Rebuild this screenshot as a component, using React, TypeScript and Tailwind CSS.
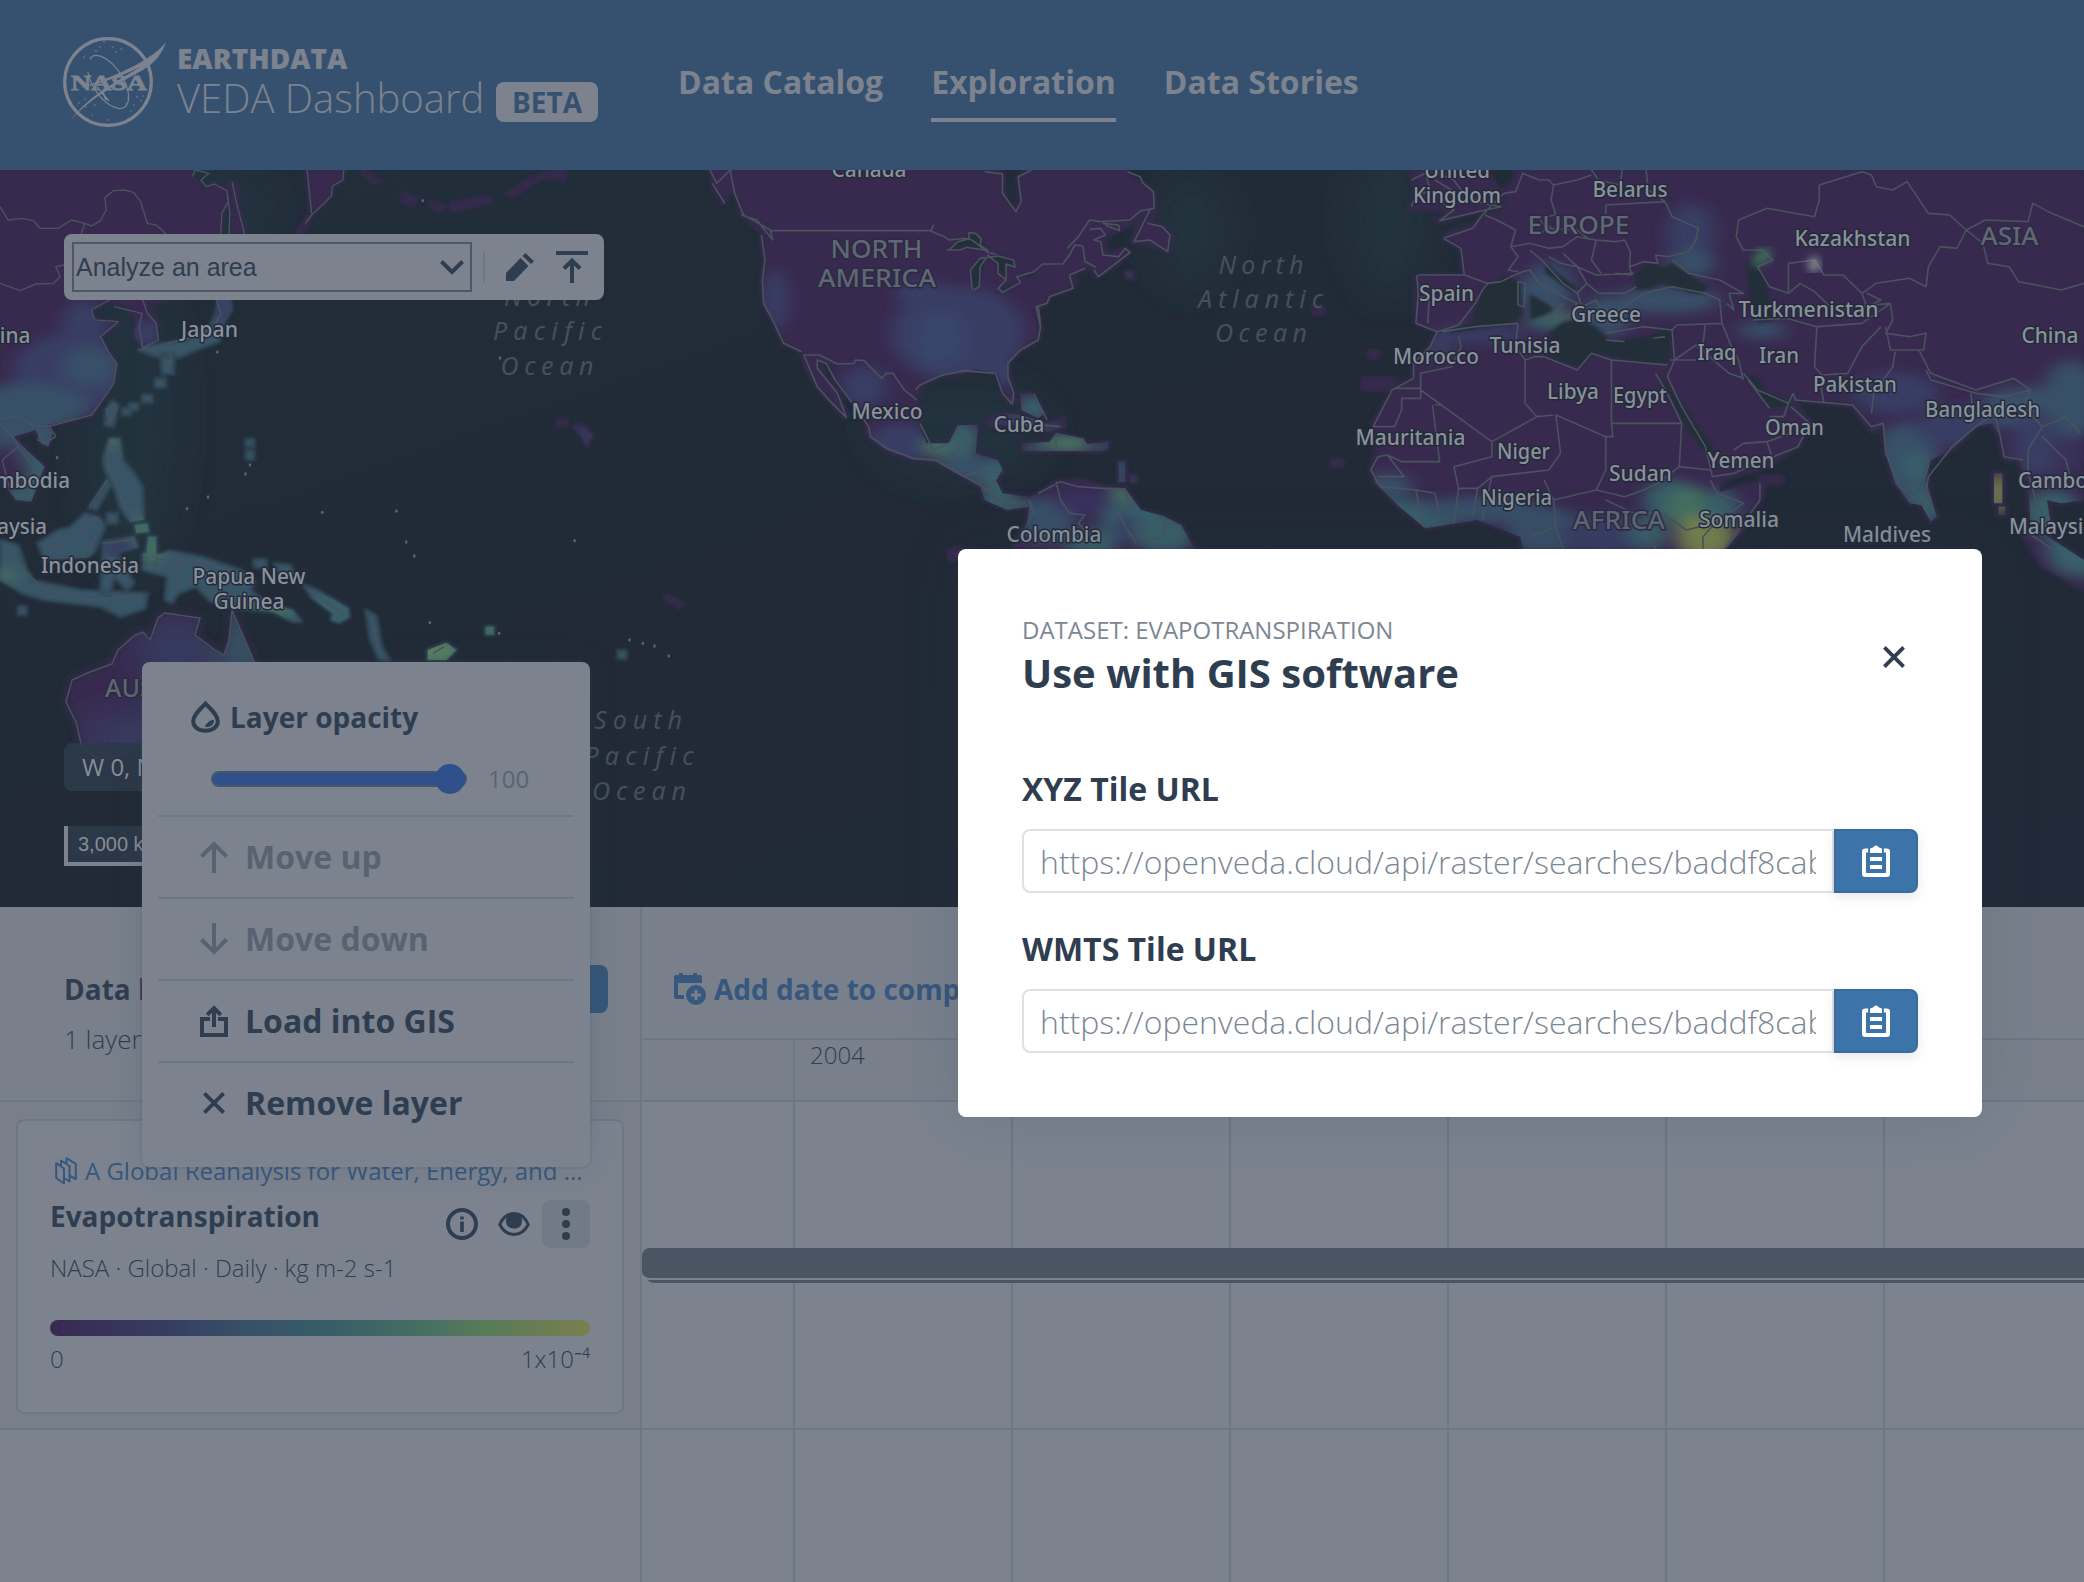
import React from "react";

type Blob = [number, number, number, number, string];

function Region({
  id,
  transform,
  land,
  blobs,
  seas,
  lines,
}: {
  id: string;
  transform: string;
  land: string;
  blobs: Blob[];
  seas?: string;
  lines: string;
}) {
  return (
    <g transform={transform}>
      <clipPath id={id}>
        <path d={land} />
      </clipPath>
      <path d={land} fill="#38294f" stroke="#33294a" strokeWidth="12" strokeLinejoin="round" filter="url(#soft)" />
      <g clipPath={`url(#${id})`}>
        <g filter="url(#wide)">
          {blobs.map(([cx, cy, rx, ry, fill], i) => (
            <ellipse key={i} cx={cx} cy={cy} rx={rx} ry={ry} fill={fill} />
          ))}
        </g>
      </g>
      {seas && <path d={seas} fill="#212d39" filter="url(#soft)" />}
      <path
        d={lines}
        fill="none"
        stroke="#4a525e"
        strokeWidth="1.6"
        strokeLinejoin="round"
        vectorEffect="non-scaling-stroke"
      />
    </g>
  );
}

const B = "#383c63";
const C = "#375068";
const T = "#375e69";
const G = "#44705f";
const Y = "#74804c";

const westLand =
  "M0 30H438L430 50 455 92 480 70 508 92 512 120 497 160 495 222 440 300 370 420 330 440 352 490 352 540 320 565 300 530 305 480 290 450 245 420 205 450 215 485 250 480 268 492 225 530 245 580 262 610 255 670 235 710 205 765 150 785 105 795 118 820 108 860 92 850 80 810 30 830 60 870 100 920 85 970 70 1025 35 1020 15 980 0 960ZM516 68 528 70 535 150 550 222H522ZM688 30H770L768 60 745 75 740 110 725 130 700 160 685 200 672 222 665 215 698 160Z" +
  "M812 30 830 42 850 65 840 70 818 50ZM902 100 930 115 925 135 905 125ZM965 125 995 140 990 152 966 140ZM1010 130 1095 110 1100 128 1015 152ZM1135 100 1190 55 1240 30H1265L1262 60 1215 50 1150 108Z" +
  "M1305 795 1328 825 1315 858 1303 830 1285 800ZM1250 780H1266V798H1250ZM1492 1305 1528 1328 1520 1342 1495 1320Z";
const islands =
  "M490 420H515L518 450 500 490 490 545 440 570 400 592 350 590 310 570 340 555 420 540 470 500 485 460ZM360 580H390L388 642H364ZM348 656H370V682H348ZM320 705H340V727H320ZM290 730H308V750H290ZM275 745H292V764H275ZM552 838H568V860H552ZM552 872H568V898H552Z" +
  "M252 722 264 735 254 800 236 795 238 750ZM245 835H268L275 900 300 940 318 980 322 1080 292 1085 270 1045 258 990 235 930 232 895ZM240 960 250 970 215 1050 200 1045ZM240 1060H262V1090H240ZM302 1095 330 1090 334 1115 305 1120ZM332 1130H350V1210H325Z" +
  "M190 1060 222 1072 235 1100 210 1180 190 1192 100 1200 85 1150 130 1110 160 1100ZM232 1145 300 1130 308 1160 260 1180 300 1270 285 1290 255 1250 245 1310 225 1300 230 1200ZM0 1140 40 1155 60 1230 75 1262 180 1290 330 1300 325 1345 270 1370 225 1340 100 1320 50 1300 0 1260ZM42 1340H58V1364H42Z" +
  "M320 1180 360 1182 380 1172 450 1190 540 1230 570 1262 562 1292 600 1330 655 1350 675 1385 655 1385 610 1355 520 1345 470 1322 440 1280 400 1300 385 1330 370 1320 375 1250 320 1230ZM570 1198H596V1222H570ZM615 1210 650 1215 660 1250 630 1250ZM680 1275 710 1290 780 1345 782 1372 760 1388 742 1380 745 1360 700 1315ZM820 1350 842 1368 855 1460 872 1500H850L830 1440ZM1088 1400H1106V1424H1088ZM958 1470 1000 1448 1022 1470 1000 1500H958ZM1385 1472H1402V1496H1385Z";
const westLines =
  "M0 140 18 180 50 175 75 182 90 205 130 205 160 180 190 190 205 198 225 182 238 150 235 112 255 92 280 90 300 98 315 125 330 190 350 195 372 222M190 190 182 222M688 30 698 160M430 50 438 30 468 40 450 60 462 80 480 72 508 92 512 122 497 160 494 222M508 92 515 160 513 222M520 66 530 130 548 222M770 30 768 60 745 78 742 108 726 130 698 165 684 190M143 315 125 320 135 350 120 370 80 372 45 392 0 370M245 420 205 450 212 480 265 485 225 530 245 580 262 610 255 670 235 710 205 765 150 785 112 798M320 420 330 460 350 490 355 540 320 565 312 500 318 460 255 440M485 420 495 460 480 500 440 530 390 545 355 560 312 570M375 560 385 600 372 625M0 775 45 768 75 800 110 798 125 830 100 850 85 840 95 810M0 790 30 830 45 870 80 930 85 975 60 1000 20 980 5 900 40 860M255 730 262 745 248 785 238 750ZM245 850 270 880 262 930 300 990 310 1060 280 1050 262 980 240 920ZM90 1150 130 1160 190 1100 215 1070 230 1090M20 1170 60 1240 100 1290 200 1320 320 1305M100 1195 200 1190 215 1120M230 1150 295 1140M245 1190 280 1240M390 1180 400 1200 395 1290M340 1190 390 1210 450 1200 530 1240M460 1290 520 1320 580 1320 650 1350M690 1290 770 1360M240 960 200 1040M835 1390 850 1480M970 1480 995 1460";

const americas =
  "M45 30 55 90 75 130 85 90 105 105 115 165 150 205 180 235 160 235 168 300 162 360 165 430 185 480 210 550 250 575 262 625 285 680 315 725 345 775 352 765 330 700 300 640 290 600 310 610 340 690 370 730 395 790 400 830 440 870 500 900 550 905 600 940 650 980 660 1020 710 1050 760 1040 755 1090 730 1140 725 1180H1135L1100 1095 1060 1068 1010 1050 975 985 930 980 870 960 820 965 780 1000 760 1010 700 1000 685 960 700 930 690 900 640 880 645 795 600 795 580 850 530 850 512 800 510 720 515 680 560 645 610 640 640 628 690 640 700 690 715 732 728 720 715 650 712 610 740 570 780 540 785 500 775 450 800 430 805 405 850 390 865 360 850 345 900 320 910 350 960 310 985 275 970 265 935 285 925 235 990 190 1010 170 1040 145 1038 95 1015 70 985 50 980 30H760L735 50 740 120 730 155 705 120 700 40 690 30Z" +
  "M1030 150 1010 180 990 245 1050 262 1072 275 1080 225 1060 200 1032 190 1042 150ZM665 775 700 760 740 765 800 790 840 775 838 800 800 815 720 795 670 795ZM740 700H765L795 760 780 775 742 750ZM745 850 805 845 820 818 880 835 890 852 938 845 935 868 920 874H745ZM960 905H975V965H960ZM988 948H1000V966H988ZM978 335H992V355H978ZM580 1168 610 1162V1200H582ZM1398 440H1416V462H1398ZM1524 575H1538V592H1524ZM1510 660H1560V682H1510ZM1440 900H1460V918H1440Z";
const lakes =
  "M580 270 600 240 640 220 670 270 620 260ZM650 295 630 330 635 390 645 380 660 300ZM665 290 700 285 725 300 725 320 705 310 710 350 690 340 685 310ZM685 390 740 365 735 375 695 397ZM735 350 775 335 770 350Z";
const americasLines =
  "M182 212H540L545 196 540 214 570 230 580 240 615 235 632 240M580 270 600 245 625 236 625 218 640 220 652 236 650 255 668 272 620 262 605 270 575 270M632 240 668 278 685 282M632 390 628 330 650 295 690 288 725 300 728 322 708 312 708 360 690 385 700 397 740 368 732 350 770 335 790 312H835L850 285 862 255 880 258 885 305 910 322M636 390 648 380 650 320 664 292M666 285 690 310 690 340 708 360M845 265 870 230 895 180 920 185 985 180 1010 152 1040 145 1038 95 1015 70 1008 50 980 35M895 208 920 205 930 225 905 240 920 245 925 285 960 290 975 265 985 278 915 350 905 330M925 190 960 195 962 212 930 195M1030 150 995 245 1030 240 1070 275 1075 225 1058 200 1025 190M660 35 700 42 700 100 730 155 742 125 735 50 765 30M45 30 60 70 90 30 100 100 120 165 180 210 185 240 150 180 115 165M50 70 78 130M160 225 168 300 162 360 165 430 185 480 210 550 250 575M255 585H290L330 612 368 610 370 600 390 602 410 630 430 655 440 640H455L480 690 508 720M255 585 285 680 315 725 350 772 330 700 285 625 285 600 305 610 325 660 370 740 400 800 405 830 440 865 500 895 550 900 600 940 650 975 690 1020 750 1030M505 690 515 675 560 648 610 632 685 640 700 700 722 732 725 700 712 650 712 610 740 570 780 540 785 500 775 440 800 430 805 410 858 385 850 345 885 325M515 790 545 870 580 850 605 800M575 890 600 870 605 840 625 855 615 900M615 950 650 930 690 940M665 990 690 950M760 1020 770 1060 755 1090M820 965 830 1020 850 1060 885 1065 870 1090 890 1120M780 1000 830 965 870 980 975 990 985 1040 960 1060 975 1100 1000 1150M1015 1080 1020 1150M1065 1075 1060 1135 1020 1140M740 790 830 800M770 700 800 780M820 830 820 870M880 835 880 865M780 440 785 490";

const east =
  "M145 150 160 100 150 30H305L330 80 348 130 300 150 215 188 200 180 240 152ZM375 30 362 70 342 95 347 150 305 165 280 190 240 210 218 235 255 265 260 345 200 342 162 350 160 490 205 515 190 560 155 605 155 650 110 690 70 790 80 860 65 920 75 970 125 1040 180 1105 290 1080 380 1130 388 1180H805L860 1090 890 1010 895 968 860 975 800 995 800 975 815 955 900 920 965 860 995 790 965 745 955 700 960 720 1020 730 1080 740 1120 815 1145 800 1150 880 1170 970 1200 1030 1225 1035 1245 1085 1258 1070 1245 1010 1235 960 1245 900 1290 870 1340 800 1375 790 1390 830 1400 900 1430 900 1450 980 1455 1080 1500 1110 1490 1020 1520 1030 1568 1020V30ZM1425 1095 1470 1110 1568 1200V1290L1480 1220ZM50 655H118L105 688H52ZM64 575H78V592H64ZM885 950H930V970H885ZM1378 940H1396V1030H1378ZM1388 1040H1402V1064H1388Z";
const seas =
  "M620 390 625 340 650 305 680 325 700 310 740 345 775 380 765 402 740 400 680 370 650 388ZM300 385 350 345 380 370 385 460 370 490 280 510 235 520 232 510 275 490 290 430ZM400 400 450 445 440 460 400 480ZM465 490 500 478 540 500 570 545 640 530 700 500 692 610 640 610 540 580 505 622 440 595 440 520ZM435 312 500 385 490 400 430 335ZM665 640 695 680 725 740 785 860 790 885 772 875 740 830 710 750ZM850 640 880 650 900 695 945 720 948 740 905 745 880 700ZM240 185 280 180 270 195 240 210ZM855 310 870 300 885 330 900 380 905 430 915 480 880 490 865 440Z";
const eastLines =
  "M150 60 180 40 190 90 160 110 150 140M200 35 240 60 260 100 300 130 340 140 290 155 210 182 240 150 215 130 235 90 200 60M218 235 280 205 300 165 345 100 370 95 385 40 420 60 440 60 450 75 500 60 530 45M450 75 445 120 455 165 420 175 435 205 500 210 525 238M530 30 545 60 590 75 595 30M645 30 650 90 685 125 560 135 560 165 550 220M685 125 700 170 755 205 750 240 735 275 690 290 665 285 670 310 640 305 610 320 615 345 580 340M218 235 255 265 262 345 310 370 340 365 360 350 385 335 400 330 420 370 470 410 500 430 480 470 430 480M165 345 260 345M162 345 165 400 160 490 205 515 250 495 285 430 300 390 312 370M165 410 188 415 185 490M305 165 330 180 370 210 360 260 375 290 355 330 375 335M360 260 400 250 440 265 470 260 500 230 540 240 580 245 600 240 612 275 610 320M400 270 425 300 470 370 500 400 520 370 500 320 465 310 440 290M470 280 500 320 540 345 620 340M540 240 530 300 550 340M430 180 445 205 420 220M520 370 545 400 600 400 625 380M500 400 510 440 540 420 560 470 600 440 640 400 700 380 770 400M560 520 640 500 700 510 710 495 805 490M700 300 735 340 800 360 850 400 820 400 830 450 815 430M770 400 800 420 805 490 825 560 840 600 850 660M835 230 840 180 900 145 940 155 1000 170 1010 120 1010 75 1100 35 1120 45 1130 80 1165 90 1195 65 1240 160 1285 165 1320 210 1360 180 1450 185 1460 130 1500 160 1568 200M835 230 850 270 890 270 912 300 880 320 905 380 945 400 970 370 1000 395 1040 450 1090 440 1160 430M945 395V310L1000 300 1020 345 1060 345 1100 400 1130 370 1200 355 1235 380 1240 320 1265 260 1300 265 1320 210 1355 250 1365 310 1410 320 1430 365 1520 390 1568 370M1100 400 1110 440 1140 420 1110 400M1160 430 1165 480 1150 520 1200 530 1235 520 1230 570 1160 570 1150 500M870 480 940 475 1005 500 1100 490 1160 430M1005 500 1000 620 1015 645 1015 690 1020 730M1015 645 1070 640 1100 560 1140 500M1220 570 1245 640 1340 690 1420 655 1455 690 1400 710 1340 700 1245 660 1235 630M1120 760 1125 700 1165 620 1170 575M955 700 960 720 1080 735 1120 800 1145 790 1150 880 1180 980 1230 1035 1240 950 1290 860 1340 800 1380 760 1390 820 1400 890 1440 900M1330 700 1335 790M1455 690 1440 740 1480 800 1450 870 1450 950M1480 800 1530 770 1560 820M1480 830 1530 900 1540 960M1450 940 1470 1040 1500 1100M850 640 880 690 945 730 955 700M860 660 905 745M945 730 935 770 905 770M700 510 705 600 750 555 820 640 850 655M695 600 750 600M770 490 765 555M705 600 690 650 720 740 770 860 785 950 830 940 965 860 990 790 950 740M830 870 850 850 900 845 950 820M900 845 910 890M205 515 190 560 155 610 155 655 110 690 70 800H115L130 750V715H170V685H115M170 690V640L235 620 255 560 250 530M170 690 320 845 415 770 450 765M200 735H215M195 735 210 905H130L100 885 80 890M320 845V890L240 920M415 770 390 730 390 600 370 560 375 490M375 490 285 500 215 515M390 600 410 590 430 590 500 630 530 580 572 600 690 615M572 600V790H720M572 790 575 830 560 830 455 765 465 880 440 930 320 950M560 830V930L540 990 450 1020 430 960M665 640 690 700 720 790 715 920 780 930M80 890 65 930 85 980 160 990 175 1100M100 885 135 950 80 950M160 990 200 1000 210 1060M240 920 250 985 240 1090M250 985 290 985 280 1070M290 985 320 950 310 1010 300 1080M450 1020 455 1100 400 1130M455 1100 470 1166M540 990 600 1010 640 990 670 970 715 920M560 1020 620 1060 680 1060 730 1110 790 1090 850 1030 795 1000 780 960M790 1090 765 1130V1166M640 1060 665 1166M885 970 885 1020 850 1090 810 1166M560 540 600 545M660 535 685 530M440 480 470 430M375 365 390 370 388 440 375 435ZM1425 1095 1500 1166";

const australia = "M66 702 72 680 90 672 112 664 118 650 135 635 143 632 150 640 158 618 165 613 200 618 195 635 215 650 224 655 229 640 232 610 245 640 257 668 258 760 160 745 130 752 100 760 82 748 76 722Z";

const places: [string, number, number, number][] = [
  ["China", 2, 343, 57], ["Japan", 209.5, 337, 57], ["Cambodia", 20, 488, 100], ["Malaysia", 4, 534, 86],
  ["Indonesia", 90, 573, 98], ["Papua New", 249, 584, 113], ["Guinea", 249, 608.5, 71],
  ["Canada", 869, 177, 75], ["Mexico", 887, 419, 71], ["Cuba", 1019, 432, 51], ["Colombia", 1054, 542, 95],
  ["United", 1457, 177.5, 66], ["Kingdom", 1457, 203, 88], ["Belarus", 1630, 197, 75], ["Kazakhstan", 1852.5, 246, 116],
  ["Spain", 1446.5, 301, 55], ["Greece", 1606, 321.5, 70], ["Turkmenistan", 1808.5, 317, 140], ["Tunisia", 1525, 353, 71],
  ["Morocco", 1436, 364, 86], ["Iraq", 1717, 360, 39], ["Iran", 1779, 363, 40], ["Libya", 1573, 399, 52],
  ["Egypt", 1640, 403, 54], ["Pakistan", 1855, 392, 84], ["Bangladesh", 1982.5, 416.5, 115], ["China", 2050, 343, 57],
  ["Oman", 1794.5, 435, 59], ["Mauritania", 1410.5, 445, 110], ["Niger", 1523.5, 459, 53], ["Sudan", 1640.5, 480.5, 63],
  ["Yemen", 1741, 468, 67], ["Nigeria", 1516.5, 505, 71], ["Somalia", 1739, 527, 80], ["Maldives", 1887, 541.5, 88],
  ["Cambodia", 2068, 488, 100], ["Malaysia", 2052, 534, 86],
];
const continents: [string, number, number, number][] = [
  ["NORTH", 876.5, 258, 92], ["AMERICA", 877, 287, 118], ["EUROPE", 1578.5, 234, 102], ["ASIA", 2009.5, 244.5, 58],
  ["AFRICA", 1619, 529, 92], ["AUSTRALIA", 172, 696.5, 134],
];
const oceans: [string, number, number, number][] = [
  ["North", 549, 305.5, 90], ["Pacific", 549.5, 340, 113], ["Ocean", 549, 374.5, 97],
  ["South", 640, 729, 92], ["Pacific", 641, 764.5, 113], ["Ocean", 641, 800, 98],
  ["North", 1263, 273.5, 89], ["Atlantic", 1262.5, 307.5, 129], ["Ocean", 1263, 341.5, 96],
];

function WorldMap() {
  return (
    <svg className="absolute inset-0 h-full w-full" viewBox="0 170 2084 737" preserveAspectRatio="none">
      <defs>
        <filter id="soft" x="-5%" y="-5%" width="110%" height="110%">
          <feGaussianBlur stdDeviation="4" />
        </filter>
        <filter id="wide" x="-20%" y="-20%" width="140%" height="140%">
          <feGaussianBlur stdDeviation="18" />
        </filter>
        <linearGradient id="deep" x1="0" y1="0" x2="1" y2="1">
          <stop offset="0" stopColor="#222e3b" />
          <stop offset="0.5" stopColor="#212a36" />
          <stop offset="1" stopColor="#222a39" />
        </linearGradient>
        <clipPath id="aus"><path d={australia} /></clipPath>
      </defs>
      <rect x="0" y="170" width="2084" height="737" fill="url(#deep)" />
      <g filter="url(#wide)" fill="#22303d">
        <ellipse cx="210" cy="210" rx="60" ry="60" />
        <ellipse cx="130" cy="420" rx="50" ry="160" />
        <ellipse cx="1190" cy="230" rx="40" ry="60" />
        <ellipse cx="1390" cy="220" rx="40" ry="80" />
        <ellipse cx="960" cy="430" rx="90" ry="50" />
      </g>
      <Region
        id="clipWest"
        transform="translate(0 160) scale(0.44643 0.33333)"
        land={westLand}
        blobs={[
          [160, 640, 130, 120, B], [60, 740, 140, 70, C], [190, 500, 50, 80, B], [200, 620, 60, 60, C], [60, 840, 90, 60, C],
          [90, 940, 30, 100, T], [15, 890, 28, 40, "#38294f"], [50, 1010, 50, 30, T], [330, 520, 40, 40, B], [1310, 830, 20, 30, B],
        ]}
        lines=""
      />
      <g transform="translate(0 160) scale(0.44643 0.33333)">
        <path d={islands} fill="#375468" stroke="#314a59" strokeWidth="8" strokeLinejoin="round" filter="url(#soft)" />
        <clipPath id="isl"><path d={islands} /></clipPath>
        <g clipPath="url(#isl)">
          <g filter="url(#wide)">
            <ellipse cx="500" cy="450" rx="25" ry="50" fill={B} />
            <ellipse cx="250" cy="845" rx="22" ry="18" fill={G} />
            <ellipse cx="15" cy="1245" rx="25" ry="20" fill={G} />
            <ellipse cx="340" cy="1170" rx="25" ry="45" fill={G} />
            <ellipse cx="620" cy="1350" rx="50" ry="20" fill={G} />
            <ellipse cx="975" cy="1475" rx="60" ry="40" fill="#578064" />
            <ellipse cx="1097" cy="1412" rx="30" ry="30" fill={G} />
            <ellipse cx="265" cy="1160" rx="40" ry="35" fill={B} />
            <ellipse cx="315" cy="1105" rx="30" ry="30" fill={G} />
            <ellipse cx="740" cy="1350" rx="60" ry="50" fill={T} />
          </g>
        </g>
        <path d={westLines} fill="none" stroke="#4a525e" strokeWidth="1.4" strokeLinejoin="round" vectorEffect="non-scaling-stroke" />
        <g fill="#5a6470">
          {[[487, 576], [128, 893], [560, 915], [550, 942], [466, 1011], [419, 1046], [722, 1057], [888, 1053], [910, 1146], [928, 1188], [1287, 1142], [1118, 1420], [1410, 1440], [1440, 1450], [1466, 1458], [1498, 1488], [963, 1388], [947, 122], [1120, 594]].map(([x, y]) => (
            <ellipse key={`${x}-${y}`} cx={x} cy={y} rx="3" ry="5" />
          ))}
        </g>
      </g>
      <path d={australia} fill="#38294f" stroke="#33294a" strokeWidth="5" filter="url(#soft)" />
      <g clipPath="url(#aus)">
        <g filter="url(#wide)">
          <ellipse cx="175" cy="650" rx="40" ry="30" fill={B} />
          <ellipse cx="140" cy="740" rx="60" ry="26" fill={B} />
          <ellipse cx="245" cy="650" rx="20" ry="50" fill={T} />
        </g>
      </g>
      <path d={australia} fill="none" stroke="#4a525e" strokeWidth="1.4" />
      <Region
        id="clipAm"
        transform="translate(690 160) scale(0.44643 0.33333)"
        land={americas}
        seas={lakes}
        blobs={[
          [600, 520, 150, 140, B], [560, 540, 60, 90, "#37446a"], [520, 400, 60, 40, B], [190, 420, 30, 90, B], [660, 640, 120, 40, B], [390, 680, 50, 60, B],
          [470, 850, 70, 60, B], [570, 860, 50, 30, G], [610, 840, 40, 60, T], [620, 930, 80, 40, C], [690, 960, 40, 70, T], [700, 1035, 60, 25, T],
          [800, 1080, 60, 70, C], [880, 1025, 70, 35, "#39335f"], [970, 1000, 30, 25, G], [1000, 1080, 80, 60, T], [1060, 1120, 70, 60, T], [900, 1150, 60, 40, T],
          [975, 1100, 25, 40, B], [770, 745, 40, 40, T], [740, 790, 60, 25, B], [840, 850, 60, 30, G], [780, 865, 40, 12, T], [920, 860, 30, 14, C], [965, 930, 20, 40, C], [985, 345, 12, 14, C],
        ]}
        lines={americasLines}
      />
      <Region
        id="clipEast"
        transform="translate(1340 160) scale(0.4745 0.33333)"
        land={east}
        seas={seas}
        blobs={[
          [740, 220, 50, 90, B], [740, 310, 50, 40, C], [690, 420, 110, 40, C], [440, 380, 50, 70, C], [440, 480, 50, 30, T], [470, 470, 20, 20, G],
          [560, 470, 50, 60, C], [300, 520, 90, 25, B], [210, 560, 30, 40, B], [890, 510, 50, 25, C], [380, 410, 15, 50, C],
          [1170, 700, 90, 60, B], [1190, 900, 70, 110, C], [1215, 920, 30, 50, T], [1230, 1040, 40, 60, T], [1300, 800, 90, 60, B], [1440, 740, 90, 60, C],
          [1540, 720, 60, 120, C], [1470, 850, 50, 100, B], [1500, 1060, 60, 70, T], [1530, 880, 30, 60, "#38335c"], [1560, 1170, 70, 80, T],
          [150, 1070, 110, 50, T], [300, 1050, 130, 40, C], [100, 980, 50, 40, C], [430, 1110, 80, 70, C], [560, 1120, 100, 60, B], [700, 1020, 60, 60, T],
          [740, 1050, 50, 70, G], [770, 1130, 60, 70, Y], [650, 1120, 40, 50, T], [800, 1040, 40, 50, T], [1387, 1000, 24, 60, Y],
        ]}
        lines={eastLines}
      />
      <g filter="url(#soft)">
        <ellipse cx="1764" cy="255" rx="7" ry="7" fill="#3d6f5a" />
        <ellipse cx="1757" cy="262" rx="5" ry="5" fill="#3d6f5a" />
        <rect x="1809" y="258" width="10" height="13" fill="#8d9498" />
      </g>
      <g fontFamily="Noto Sans, sans-serif" textAnchor="middle" paintOrder="stroke" strokeLinejoin="round">
        <g fontSize="25" fontStyle="italic" fill="#46505b" letterSpacing="4">
          {oceans.map(([t, x, y, w], i) => (
            <text key={i} x={x} y={y} textLength={w}>{t}</text>
          ))}
        </g>
        <g fontSize="26" fontWeight="500" fill="#5f6675" stroke="#2c2a40" strokeWidth="3">
          {continents.map(([t, x, y, w], i) => (
            <text key={i} x={x} y={y} textLength={w} lengthAdjust="spacingAndGlyphs">{t}</text>
          ))}
        </g>
        <g fontSize="22" fontWeight="500" fill="#8a919c" stroke="#222a38" strokeWidth="3">
          {places.map(([t, x, y, w], i) => (
            <text key={i} x={x} y={y} textLength={w} lengthAdjust="spacingAndGlyphs">{t}</text>
          ))}
        </g>
      </g>
    </svg>
  );
}

function NasaLogo() {
  const stars = [[104, 42], [113, 47], [121, 49], [96, 51], [91, 59], [84, 57], [79, 103], [86, 107], [95, 105], [92, 115], [116, 52], [128, 98], [134, 105], [137, 97], [141, 101], [131, 111], [115, 107], [108, 120], [126, 104], [85, 99], [100, 47], [143, 96]];
  return (
    <svg className="h-[92px] w-[112px]" viewBox="56 36 112 92" fill="none" stroke="#7c838f">
      <circle cx="108" cy="82" r="43.3" strokeWidth="3.2" />
      <ellipse cx="108" cy="82" rx="15" ry="30" strokeWidth="1.2" transform="rotate(-33 108 82)" strokeDasharray="92 14" />
      <g fill="#7c838f" stroke="none">
        {stars.map(([x, y]) => <circle key={`${x}-${y}`} cx={x} cy={y} r="0.8" />)}
      </g>
      <text x="71" y="90" fontFamily="Liberation Serif, serif" fontWeight="700" fontSize="22" textLength="76" lengthAdjust="spacingAndGlyphs" fill="#7c838f" strokeWidth="0.8">NASA</text>
      <path d="M58 95C90 85 115 76 136 65 150 57 160 50 166 42 161 56 154 63 143 70 118 84 92 96 70 121 88 97 112 84 140 67 118 78 95 85 80 88Z" fill="#7c838f" stroke="none" />
      <path d="M97 87 109 101M103 92 106 100" strokeWidth="1.6" />
    </svg>
  );
}

function Close({ className }: { className: string }) {
  return (
    <svg className={className} viewBox="0 0 22 22" fill="none" stroke="currentColor" strokeWidth="3.8">
      <path d="M1.4 1.4 20.6 20.6M20.6 1.4 1.4 20.6" />
    </svg>
  );
}

function MenuItem({ icon, label, muted }: { icon: React.ReactNode; label: string; muted?: boolean }) {
  return (
    <div className={`flex h-[82px] items-center border-t-2 border-[#6f7684] pl-[42px] ${muted ? "text-[#596271]" : "text-[#2f3d50]"}`}>
      <div className="flex w-[28px] justify-center">{icon}</div>
      <span className="ml-[17px] text-[32px] leading-[40px] font-bold whitespace-nowrap">{label}</span>
    </div>
  );
}

function LayerMenu() {
  return (
    <div className="absolute top-[662px] left-[142px] h-[505px] w-[448px] rounded-lg bg-[#7c838f] px-4 shadow-[0_0_0_2px_rgba(70,82,100,0.1),0_0_32px_rgba(50,65,80,0.16)]">
      <div className="h-[153px] pt-[36px]">
        <div className="flex h-[38px] items-center pl-[33px] text-[#2f3d50]">
          <svg className="h-8 w-[29px]" viewBox="0 0 29 32" fill="none" stroke="currentColor" strokeWidth="4">
            <path d="M14.5 2.6C10 7.5 2.2 13.5 2.2 20.2 2.2 26 7.5 29.8 14.5 29.8S26.8 26 26.8 20.2C26.8 13.5 19 7.5 14.5 2.6Z" />
            <path d="M14 26C15 22 18.5 19.5 23 18.5 23.5 23 20 26.5 14 26Z" fill="currentColor" stroke="none" />
          </svg>
          <span className="ml-[10px] text-[28px] leading-[36px] font-bold whitespace-nowrap">Layer opacity</span>
        </div>
        <div className="mt-[28px] flex h-[30px] items-center pl-[53px]">
          <div className="flex h-4 w-[256px] items-center justify-end rounded-full border-2 border-[#45566f] bg-[#30508c]">
            <div className="h-[30px] w-[30px] shrink-0 rounded-full bg-[#30508c]" />
          </div>
          <span className="ml-[21px] text-[24px] leading-[30px] text-[#5a6371]">100</span>
        </div>
      </div>
      <MenuItem muted label="Move up" icon={
        <svg className="h-8 w-7" viewBox="0 0 28 32" fill="none" stroke="currentColor" strokeWidth="4"><path d="M14 3V32M1.5 15.5 14 3 26.5 15.5" /></svg>
      } />
      <MenuItem muted label="Move down" icon={
        <svg className="h-8 w-7" viewBox="0 0 28 32" fill="none" stroke="currentColor" strokeWidth="4"><path d="M14 0V29M1.5 16.5 14 29 26.5 16.5" /></svg>
      } />
      <MenuItem label="Load into GIS" icon={
        <svg className="h-8 w-7" viewBox="0 0 28 32" fill="none" stroke="currentColor" strokeWidth="4"><path d="M10 14H2V30H26V14H18M14 22V3M7.2 9.8 14 3 20.8 9.8" /></svg>
      } />
      <MenuItem label="Remove layer" icon={<Close className="h-[22px] w-[22px]" />} />
    </div>
  );
}

function UrlField({ label }: { label: string }) {
  return (
    <div>
      <div className="text-[32px] leading-[40px] font-bold">{label}</div>
      <div className="mt-[20px] flex h-16">
        <div className="w-[812px] rounded-l-lg border-2 border-[#dfe0e4] px-4">
          <div className="overflow-hidden text-[32px] leading-[62px] font-light whitespace-nowrap text-[#7c8794]">
            https://openveda.cloud/api/raster/searches/baddf8cab0d2
          </div>
        </div>
        <div className="flex w-[84px] items-center justify-center rounded-r-lg border-2 border-[#386c9f] bg-[#3c73a8] shadow-[0_4px_12px_rgba(44,62,80,0.12)]">
          <svg className="h-8 w-7" viewBox="0 0 28 32" fill="none" stroke="#ffffff" strokeWidth="4">
            <path d="M6.2 5.5H3.2Q2 5.5 2 6.7V28.8Q2 30 3.2 30H24.8Q26 30 26 28.8V6.7Q26 5.5 24.8 5.5H21.8" />
            <path d="M8 8V4.5Q8 3.2 9.3 3L11 2.4Q14-1.4 17 2.4L18.7 3Q20 3.2 20 4.5V8Z" fill="#ffffff" stroke="none" />
            <path d="M8 14H20M8 22H20" />
          </svg>
        </div>
      </div>
    </div>
  );
}

function GisModal() {
  return (
    <div className="absolute top-[549px] left-[958px] h-[568px] w-[1024px] rounded-lg bg-white px-16 text-[#2f3d50] shadow-[0_0_64px_rgba(44,62,80,0.16)]">
      <div className="flex pt-[66px]">
        <div className="flex-1">
          <div className="text-[24px] leading-[30px] whitespace-nowrap text-[#7c8794]">DATASET: EVAPOTRANSPIRATION</div>
          <div className="mt-[2px] text-[40px] leading-[52px] font-bold whitespace-nowrap">Use with GIS software</div>
        </div>
        <Close className="mt-[31px] mr-[13px] h-[22px] w-[22px]" />
      </div>
      <div className="mt-[70px] flex flex-col gap-9">
        <UrlField label="XYZ Tile URL" />
        <UrlField label="WMTS Tile URL" />
      </div>
    </div>
  );
}

function LayerCard() {
  return (
    <div className="mx-4 mt-4 h-[295px] w-[608px] rounded-lg border-2 border-[#6f7684] bg-[#7c838f] pt-[34px] pr-8 pl-8">
      <div className="flex h-8 items-center text-[#36577e]">
        <svg className="ml-[5px] h-7 w-[22px]" viewBox="0 0 22 28" fill="none" stroke="currentColor" strokeWidth="2" strokeLinejoin="round">
          <path d="M1.2 6 9 11.5V26.5L1.2 21ZM6 8.5V3.5L14.5 9V24.5L9.5 21.5M11.5 6V1.2L20.8 6.8V22L15 19" />
        </svg>
        <span className="ml-2 text-[24px] leading-8 whitespace-nowrap">A Global Reanalysis for Water, Energy, and ...</span>
      </div>
      <div className="mt-[9px] flex h-10 text-[#2f3d50]">
        <span className="flex-1 text-[28px] leading-10 font-bold">Evapotranspiration</span>
        <div className="mt-[4px] flex h-12 items-center">
          <svg className="h-8 w-8" viewBox="0 0 32 32" fill="none" stroke="currentColor" strokeWidth="4">
            <circle cx="16" cy="16" r="14" />
            <path d="M16 13.5V24M16 8.4V11.4" strokeWidth="3.6" />
          </svg>
          <svg className="ml-5 h-6 w-8" viewBox="0 0 32 24" fill="none" stroke="currentColor" strokeWidth="3">
            <path d="M1.8 12.5C5 5 10 1.6 16 1.6S27 5 30.2 12.5C27 19 22 22.4 16 22.4S5 19 1.8 12.5Z" />
            <path d="M8 9C8 4 11 1.5 16 1.5S24 4 24 9 20.5 16.5 16 16.5 8 14 8 9Z" fill="currentColor" stroke="none" />
          </svg>
          <div className="ml-3 flex h-12 w-12 flex-col items-center justify-center gap-1 rounded-lg bg-[#737a87]">
            <span className="h-2 w-2 rounded-full bg-[#2f3d50]" />
            <span className="h-2 w-2 rounded-full bg-[#2f3d50]" />
            <span className="h-2 w-2 rounded-full bg-[#2f3d50]" />
          </div>
        </div>
      </div>
      <div className="mt-4 text-[24px] leading-8 font-light text-[#2f3d50]">NASA · Global · Daily · kg m-2 s-1</div>
      <div className="mt-9 h-4 rounded-full bg-[linear-gradient(90deg,#38294f,#363b60_20%,#375067_36%,#375e67_52%,#476f62_70%,#577a58_80%,#7a7f4e)]" />
      <div className="mt-[7px] flex justify-between text-[24px] leading-8 font-light text-[#2f3d50]">
        <span>0</span>
        <span>1x10⁻⁴</span>
      </div>
    </div>
  );
}

function GridColumns() {
  return (
    <div className="flex h-full">
      <div className="w-[153px] shrink-0 border-r-2 border-[#6f7684]" />
      {[0, 1, 2, 3, 4].map((i) => (
        <div key={i} className="w-[218px] shrink-0 border-r-2 border-[#6f7684]" />
      ))}
    </div>
  );
}

export default function App() {
  return (
    <div className="relative h-[1582px] w-[2084px] overflow-hidden bg-[#7c838f] font-['Open_Sans',sans-serif]">
      <header className="flex h-[170px] items-center bg-[#36516f] pb-[6px] pl-[56px] text-[#7c838f]">
        <NasaLogo />
        <div className="ml-[9px] flex h-20">
          <div className="w-[319px] whitespace-nowrap">
            <div className="text-[28px] leading-8 font-extrabold">EARTHDATA</div>
            <div className="text-[40px] leading-[48px] font-light">VEDA Dashboard</div>
          </div>
          <div className="flex h-10 w-[102px] items-center justify-center self-end rounded-lg bg-[#7c838f] text-[28px] leading-none font-bold text-[#36516f]">BETA</div>
        </div>
        <nav className="ml-[80px] flex h-20 items-center gap-12 text-[32px] font-bold whitespace-nowrap">
          <span>Data Catalog</span>
          <span className="flex h-20 items-center shadow-[inset_0_-4px_0_#7c838f]">Exploration</span>
          <span>Data Stories</span>
        </nav>
      </header>

      <section className="relative h-[737px] overflow-hidden">
        <WorldMap />
        <div className="absolute top-[64px] left-[64px] flex h-[66px] w-[540px] items-center rounded-lg bg-[#7c838f] pl-2 text-[#2f3d50]">
          <div className="flex h-[50px] w-[400px] items-center justify-between border-2 border-[#4d5767] pr-[6px] pl-[2px]">
            <span className="font-['Liberation_Sans',sans-serif] text-[25px] leading-8">Analyze an area</span>
            <svg className="h-4 w-6" viewBox="0 0 24 16" fill="none" stroke="currentColor" strokeWidth="4"><path d="M1.5 2.5 12 13 22.5 2.5" /></svg>
          </div>
          <div className="ml-[11px] h-8 w-[2px] bg-[#6f7684]" />
          <svg className="ml-[21px] h-7 w-7" viewBox="0 0 28 28" fill="currentColor">
            <path d="M0 20 14.5 5 22.5 13 8 28H0ZM16.5 3 19.5 0 28 8.2 25 11Z" />
          </svg>
          <svg className="ml-[22px] h-8 w-8" viewBox="0 0 32 32" fill="none" stroke="currentColor" strokeWidth="4">
            <path d="M0 2H32M16 32V9.5M8 17.5 16 9.5 24 17.5" />
          </svg>
        </div>
        <div className="absolute top-[573px] left-[64px] h-12 w-[200px] rounded-lg bg-[#2c3a49]/90 pl-[18px] text-[24px] leading-[48px] text-[#868d97]">W 0, N 0</div>
        <div className="absolute top-[656px] left-[64px] h-10 w-[200px] border-b-4 border-l-4 border-[#7c838f] bg-[#2b3848] pl-[10px] font-['Liberation_Sans',sans-serif] text-[20px] leading-[36px] text-[#868d97]">3,000 km</div>
      </section>

      <section className="flex h-[675px]">
        <div className="w-[640px]">
          <div className="flex h-[195px] justify-between border-b-2 border-[#6f7684] bg-[#79808c] pt-[58px] pr-8 pl-16 text-[#2f3d50]">
            <div className="pt-[6px]">
              <div className="text-[28px] leading-9 font-bold">Data layers</div>
              <div className="mt-[14px] text-[26px] leading-9 font-light">1 layer</div>
            </div>
            <div className="h-12 w-[160px] rounded-lg bg-[#36577a]" />
          </div>
          <div className="h-[328px] border-b-2 border-[#6f7684] bg-[#787f8b] pt-px">
            <LayerCard />
          </div>
        </div>
        <div className="relative flex-1 border-l-2 border-[#6f7684]">
          <div className="flex h-[133px] items-center border-b-2 border-[#6f7684] bg-[#79808c] pt-[32px] pl-[32px] text-[#36577e]">
            <svg className="h-8 w-8" viewBox="0 0 32 32" fill="currentColor">
              <path d="M0 4Q0 2 2 2H5V0H9V2H19V0H23V2H26Q28 2 28 4V10H4V22H10V26H2Q0 26 0 24Z" />
              <path fillRule="evenodd" d="M22 12A10 10 0 1 1 22 32 10 10 0 0 1 22 12ZM20.5 17V20.5H17V23.5H20.5V27H23.5V23.5H27V20.5H23.5V17Z" />
            </svg>
            <span className="ml-2 text-[28px] leading-9 font-bold whitespace-nowrap">Add date to compare</span>
          </div>
          <div className="relative h-[62px] border-b-2 border-[#6f7684] bg-[#79808c]">
            <GridColumns />
            <span className="absolute top-0 left-[168px] text-[24px] leading-[30px] font-light text-[#2f3d50]">2004</span>
          </div>
          <div className="relative h-[328px] border-b-2 border-[#6f7684]">
            <GridColumns />
            <div className="absolute top-[148px] right-0 left-[4px] h-[33px] rounded-l-lg bg-[#4a5563]" />
            <div className="absolute top-[146px] right-0 left-0 h-[32px] rounded-l-lg border-b-2 border-[#7c838f] bg-[#4a5563]" />
          </div>
          <div className="h-[152px]"><GridColumns /></div>
        </div>
      </section>

      <LayerMenu />
      <GisModal />
    </div>
  );
}
